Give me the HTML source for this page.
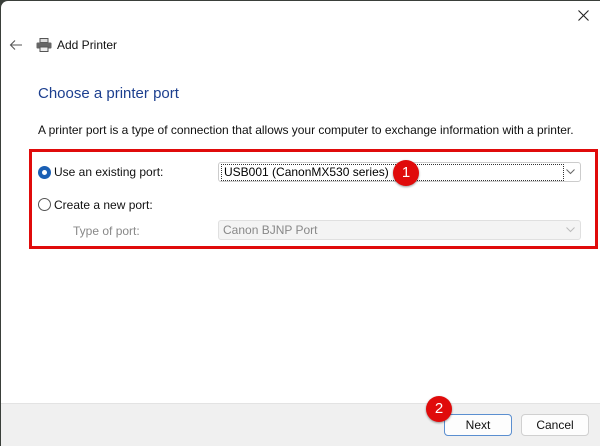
<!DOCTYPE html>
<html><head><style>
body{margin:0;width:600px;height:444px;background:#3a3f3a;font-family:"Liberation Sans",sans-serif;overflow:hidden;position:relative}
.win{position:absolute;left:1px;top:1px;width:599px;height:443px;background:#fff;border-radius:7px 0 0 0}
.t{position:absolute;white-space:nowrap}
.foot{position:absolute;left:0;top:402px;width:599px;height:42px;background:#f0f0f0;border-top:1px solid #e3e3e3}
.btn{position:absolute;top:413px;width:66px;height:20px;background:#fdfdfd;border:1px solid #d0d0d0;border-radius:4px;font-size:12px;text-align:center;line-height:20px;color:#111}
.badge{position:absolute;width:26px;height:26px;border-radius:50%;background:#e00b0b;color:#fff;font-size:15px;text-align:center;line-height:26px;box-shadow:0 1px 2px rgba(0,0,0,.4)}
.combo{position:absolute;left:217px;width:363px;height:20px;border:1px solid #ccc;border-radius:3px;font-size:12px;line-height:18px;box-sizing:border-box}
.chev{position:absolute;right:5px;top:6px}
</style></head><body>
<div class="win">
<svg style="position:absolute;left:577px;top:9px" width="11" height="11"><path d="M0.5 0.5L10.5 10.5M10.5 0.5L0.5 10.5" stroke="#222" stroke-width="1.1"/></svg>
<svg style="position:absolute;left:8px;top:38px" width="14" height="12"><path d="M13 6H2M6 1.5L1.5 6 6 10.5" stroke="#555" stroke-width="1.1" fill="none"/></svg>
<svg style="position:absolute;left:35px;top:37px" width="16" height="14"><rect x="4" y="0.5" width="8" height="4" fill="#ddd" stroke="#555"/><rect x="0.5" y="4.5" width="15" height="6" rx="1" fill="#666"/><rect x="4" y="9" width="8" height="4.5" fill="#eee" stroke="#555"/></svg>
<div class="t" style="left:56px;top:37px;font-size:12px;color:#111">Add Printer</div>
<div class="t" style="left:37px;top:84px;font-size:15px;color:#1c3f8f">Choose a printer port</div>
<div class="t" style="left:37px;top:122px;font-size:12px;color:#111;letter-spacing:-0.02px">A printer port is a type of connection that allows your computer to exchange information with a printer.</div>
<div style="position:absolute;left:28px;top:148px;width:563px;height:94px;border:3px solid #e00b0b"></div>
<div style="position:absolute;left:37px;top:165px;width:13px;height:13px;border-radius:50%;background:#1a5fb4"></div>
<div style="position:absolute;left:41px;top:169px;width:5px;height:5px;border-radius:50%;background:#fff"></div>
<div class="t" style="left:53px;top:164px;font-size:12px;color:#111">Use an existing port:</div>
<div class="combo" style="top:161px;background:#fff"><div style="position:absolute;left:2px;top:1px;width:339px;height:15px;border:1px dotted #333;line-height:15px;padding-left:2px">USB001 (CanonMX530 series)</div><svg class="chev" width="9" height="6"><path d="M0.5 0.5L4.5 4.5 8.5 0.5" stroke="#666" fill="none"/></svg></div>
<div style="position:absolute;left:37px;top:197px;width:11px;height:11px;border-radius:50%;border:1px solid #555;background:#fff"></div>
<div class="t" style="left:53px;top:197px;font-size:12px;color:#111">Create a new port:</div>
<div class="t" style="left:72px;top:223px;font-size:12px;color:#888">Type of port:</div>
<div class="combo" style="top:219px;background:#f4f4f4;border-color:#e0e0e0;color:#888"><span style="margin-left:4px">Canon BJNP Port</span><svg class="chev" width="9" height="6"><path d="M0.5 0.5L4.5 4.5 8.5 0.5" stroke="#bbb" fill="none"/></svg></div>
<div class="badge" style="left:392px;top:159px">1</div>
<div class="foot"></div>
<div class="btn" style="left:443px;border-color:#5b8fd0">Next</div>
<div class="btn" style="left:520px">Cancel</div>
<div class="badge" style="left:425px;top:395px">2</div>
</div>
</body></html>
